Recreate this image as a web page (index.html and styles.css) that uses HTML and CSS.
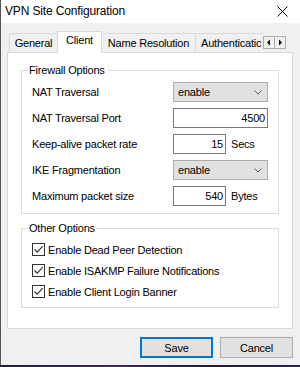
FILE: index.html
```html
<!DOCTYPE html>
<html lang="en">
  <head>
    <meta charset="UTF-8" />
    <title>VPN Site Configuration</title>
    <link rel="stylesheet" href="styles.css">
  </head>
  <body>
    <div class="window">
      <div class="titlebar">
        <span class="title">VPN Site Configuration</span>
        <svg class="close-icon" width="11" height="11" viewBox="0 0 11 11">
          <path d="M0.5 0.5 L10.5 10.5 M10.5 0.5 L0.5 10.5" stroke="#000" stroke-width="1" fill="none" />
        </svg>
      </div>

      <div class="client">
        <div class="tab-row">
          <div class="tab-strip">
            <div class="tab tab-general">General</div>
            <div class="tab tab-client active">Client</div>
            <div class="tab tab-names">Name Resolution</div>
            <div class="tab tab-auth">Authenticatic</div>
          </div>
          <div class="tab-scroll">
            <span class="scroll-btn">
              <svg width="10" height="11" viewBox="0 0 10 11"><path d="M6 2.5 L3 5.5 L6 8.5 Z" fill="#000" /></svg>
            </span>
            <span class="scroll-btn">
              <svg width="10" height="11" viewBox="0 0 10 11"><path d="M4 2.5 L7 5.5 L4 8.5 Z" fill="#000" /></svg>
            </span>
          </div>
        </div>

        <div class="panel">
          <fieldset class="group firewall">
            <legend>Firewall Options</legend>
            <div class="row">
              <span class="label">NAT Traversal</span>
              <div class="select">enable
                <svg class="chevron" width="8" height="5" viewBox="0 0 8 5"><path d="M0.5 0.5 L4 4 L7.5 0.5" stroke="#606060" fill="none" /></svg>
              </div>
            </div>
            <div class="row">
              <span class="label">NAT Traversal Port</span>
              <div class="input wide">4500</div>
            </div>
            <div class="row">
              <span class="label">Keep-alive packet rate</span>
              <div class="field-unit"><div class="input short">15</div><span class="unit">Secs</span></div>
            </div>
            <div class="row">
              <span class="label">IKE Fragmentation</span>
              <div class="select">enable
                <svg class="chevron" width="8" height="5" viewBox="0 0 8 5"><path d="M0.5 0.5 L4 4 L7.5 0.5" stroke="#606060" fill="none" /></svg>
              </div>
            </div>
            <div class="row">
              <span class="label">Maximum packet size</span>
              <div class="field-unit"><div class="input short">540</div><span class="unit">Bytes</span></div>
            </div>
          </fieldset>

          <fieldset class="group other">
            <legend>Other Options</legend>
            <div class="check">
              <span class="box"><svg width="11" height="11" viewBox="0 0 11 11"><path d="M1.5 5.5 L4.2 8.2 L9.8 2.2" stroke="#333" stroke-width="1.2" fill="none" /></svg></span>
              Enable Dead Peer Detection
            </div>
            <div class="check">
              <span class="box"><svg width="11" height="11" viewBox="0 0 11 11"><path d="M1.5 5.5 L4.2 8.2 L9.8 2.2" stroke="#333" stroke-width="1.2" fill="none" /></svg></span>
              Enable ISAKMP Failure Notifications
            </div>
            <div class="check">
              <span class="box"><svg width="11" height="11" viewBox="0 0 11 11"><path d="M1.5 5.5 L4.2 8.2 L9.8 2.2" stroke="#333" stroke-width="1.2" fill="none" /></svg></span>
              Enable Client Login Banner
            </div>
          </fieldset>
        </div>

        <div class="buttons">
          <button class="btn default">Save</button>
          <button class="btn">Cancel</button>
        </div>
      </div>
    </div>
  </body>
</html>
```

FILE: styles.css
```css
/* vpn site configuration dialog */

* {
  margin: 0;
  padding: 0;
  box-sizing: border-box;
}

body {
  width: 300px;
  height: 367px;
  overflow: hidden;
  background: linear-gradient(90deg, #241c3a, #3a2a5a 40%, #1e1a34 70%, #2c2248);
  font-family: "Liberation Sans", Arial, sans-serif;
  font-size: 11px;
  letter-spacing: -0.2px;
  color: #000;
}

.window {
  width: 300px;
  height: 365px;
  border-left: 1px solid #555;
  background-color: #f0f0f0;
  display: flex;
  flex-direction: column;
}

.titlebar {
  height: 23px;
  background-color: #fff;
  display: flex;
  align-items: center;
  justify-content: space-between;
  padding: 0 12px 1px 4px;
  flex-shrink: 0;
}

.title {
  font-size: 12px;
  letter-spacing: -0.15px;
}

.close-icon {
  display: block;
}

.client {
  flex: 1;
  padding-top: 8px;
}

/* tabs */
.tab-row {
  display: flex;
  align-items: flex-start;
  padding-left: 8px;
  height: 21px;
}

.tab-strip {
  display: flex;
  align-items: flex-start;
  width: 254px;
  height: 22px;
  overflow: hidden;
  position: relative;
  z-index: 1;
}

.tab {
  height: 19px;
  margin-top: 2px;
  line-height: 18px;
  border: 1px solid #d9d9d9;
  border-bottom: none;
  background-color: #f0f0f0;
  margin-right: -1px;
  white-space: nowrap;
  text-align: center;
  flex-shrink: 0;
}

.tab-general { width: 49px; }
.tab-client { width: 45px; }
.tab-names { width: 95px; }
.tab-auth {
  text-align: left;
  padding-left: 5px;
  width: 80px;
}

.tab.active {
  height: 22px;
  margin-top: 0;
  line-height: 17px;
  background-color: #fff;
  position: relative;
  z-index: 1;
}

.tab-scroll {
  display: flex;
  margin-top: 5px;
}

.scroll-btn {
  width: 12px;
  height: 13px;
  border: 1px solid #adadad;
  background-color: #f0f0f0;
  display: flex;
  align-items: center;
  justify-content: center;
  margin-right: -1px;
}

/* panel */
.panel {
  margin-left: 6px;
  width: 286px;
  height: 277px;
  background-color: #fff;
  border: 1px solid #d9d9d9;
  padding: 10px 13px 0 13px;
}

.group {
  border: 1px solid #dcdcdc;
  padding: 2px 10px 4px 10px;
}

.group legend {
  line-height: 14px;
  padding: 0 1px;
  margin-left: -4px;
}

.group.other {
  margin-top: 7px;
  padding-top: 4px;
  padding-bottom: 5px;
}

.row {
  display: grid;
  grid-template-columns: 141px auto;
  align-items: center;
  height: 26px;
}

.select {
  width: 95px;
  height: 20px;
  background-color: #e1e1e1;
  border: 1px solid #adadad;
  padding-left: 4px;
  line-height: 18px;
  display: flex;
  justify-content: space-between;
  align-items: center;
  padding-right: 5px;
}

.chevron {
  display: block;
}

.input {
  height: 20px;
  background-color: #fff;
  border: 1px solid #7a7a7a;
  text-align: right;
  line-height: 18px;
  padding-right: 2px;
}

.input.wide { width: 95px; }
.input.short { width: 53px; }

.field-unit {
  display: flex;
  align-items: center;
}

.unit {
  margin-left: 5px;
}

.check {
  display: flex;
  align-items: center;
  height: 21px;
}

.box {
  width: 13px;
  height: 13px;
  border: 1px solid #333;
  background-color: #fff;
  margin-right: 3px;
  display: flex;
  align-items: center;
  justify-content: center;
}

.box svg {
  display: block;
}

/* bottom buttons */
.buttons {
  display: flex;
  justify-content: flex-end;
  gap: 7px;
  padding-right: 7px;
  margin-top: 8px;
}

.btn {
  width: 73px;
  height: 21px;
  background-color: #e1e1e1;
  border: 1px solid #adadad;
  font-family: inherit;
  font-size: 11px;
  letter-spacing: -0.2px;
  color: #000;
}

.btn.default {
  border: 2px solid #0078d7;
}
```
